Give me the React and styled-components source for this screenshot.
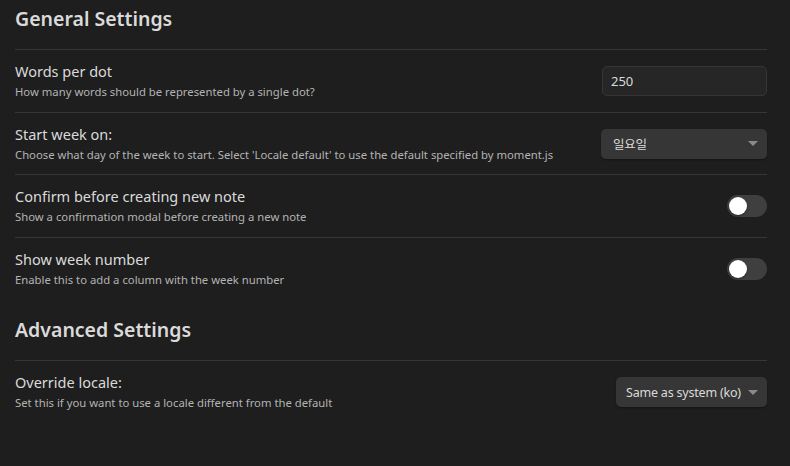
import styled, { createGlobalStyle } from "styled-components";

const Global = createGlobalStyle`
  html, body {
    margin: 0;
    padding: 0;
    background: #1e1e1e;
  }
  body {
    font-family: "Noto Sans", "Noto Sans CJK KR", sans-serif;
    color: #dadada;
  }
`;

const Page = styled.div`
  width: 790px;
  height: 466px;
  box-sizing: border-box;
  padding: 0 23px 0 15px;
  background: #1e1e1e;
  overflow: hidden;
`;

const Heading = styled.h2`
  margin: 0;
  padding: ${(p) => (p.first ? "4px" : "14px")} 0 15px;
  font-size: 19.5px;
  font-weight: 600;
  line-height: 30px;
  color: #dadada;
  border-bottom: 1px solid #363636;
`;

const Row = styled.div`
  display: flex;
  align-items: center;
  justify-content: space-between;
  height: 62.7px;
  box-sizing: border-box;
  border-bottom: ${(p) => (p.last ? "none" : "1px solid #363636")};
`;

const Info = styled.div`
  display: flex;
  flex-direction: column;
  gap: 3px;
  margin-bottom: 1px;
`;

const Name = styled.div`
  font-size: 14.5px;
  line-height: 20px;
  color: #dadada;
`;

const Desc = styled.div`
  font-size: 11.3px;
  line-height: 16px;
  color: #b3b3b3;
`;

const Input = styled.div`
  width: 165px;
  height: 30px;
  box-sizing: border-box;
  padding: 0 8px;
  display: flex;
  align-items: center;
  background: #262626;
  border: 1px solid #363636;
  border-radius: 5px;
  font-size: 13px;
  color: #dadada;
`;

const Select = styled.div`
  width: ${(p) => p.w}px;
  height: 30px;
  box-sizing: border-box;
  padding: 0 9px 0 ${(p) => p.pl}px;
  display: flex;
  align-items: center;
  justify-content: space-between;
  gap: 6px;
  background: #363636;
  border-radius: 5px;
  box-shadow: 0 1px 2px rgba(0, 0, 0, 0.35);
  font-size: 12.5px;
  letter-spacing: -0.2px;
  color: #dadada;
  white-space: nowrap;
`;

const Caret = styled.span`
  flex: none;
  width: 0;
  height: 0;
  border-left: 5px solid transparent;
  border-right: 5px solid transparent;
  border-top: 5px solid #8a8a8a;
`;

const Toggle = styled.div`
  width: 40px;
  height: 22px;
  border-radius: 11px;
  background: #3f3f3f;
  display: flex;
  align-items: center;
  padding: 0 2px;
  box-sizing: border-box;
`;

const Knob = styled.span`
  width: 18px;
  height: 18px;
  border-radius: 50%;
  background: #ffffff;
  box-shadow: 0 1px 2px rgba(0, 0, 0, 0.4);
`;

const Setting = ({ name, desc, last, children }) => (
  <Row last={last}>
    <Info>
      <Name>{name}</Name>
      <Desc>{desc}</Desc>
    </Info>
    {children}
  </Row>
);

export default function App() {
  return (
    <>
      <Global />
      <Page>
        <Heading first>General Settings</Heading>
        <Setting name="Words per dot" desc="How many words should be represented by a single dot?">
          <Input>250</Input>
        </Setting>
        <Setting
          name="Start week on:"
          desc="Choose what day of the week to start. Select 'Locale default' to use the default specified by moment.js"
        >
          <Select w={166} pl={12}>
            일요일
            <Caret />
          </Select>
        </Setting>
        <Setting name="Confirm before creating new note" desc="Show a confirmation modal before creating a new note">
          <Toggle>
            <Knob />
          </Toggle>
        </Setting>
        <Setting name="Show week number" desc="Enable this to add a column with the week number" last>
          <Toggle>
            <Knob />
          </Toggle>
        </Setting>
        <Heading>Advanced Settings</Heading>
        <Setting
          name="Override locale:"
          desc="Set this if you want to use a locale different from the default"
          last
        >
          <Select w={151} pl={10}>
            Same as system (ko)
            <Caret />
          </Select>
        </Setting>
      </Page>
    </>
  );
}
